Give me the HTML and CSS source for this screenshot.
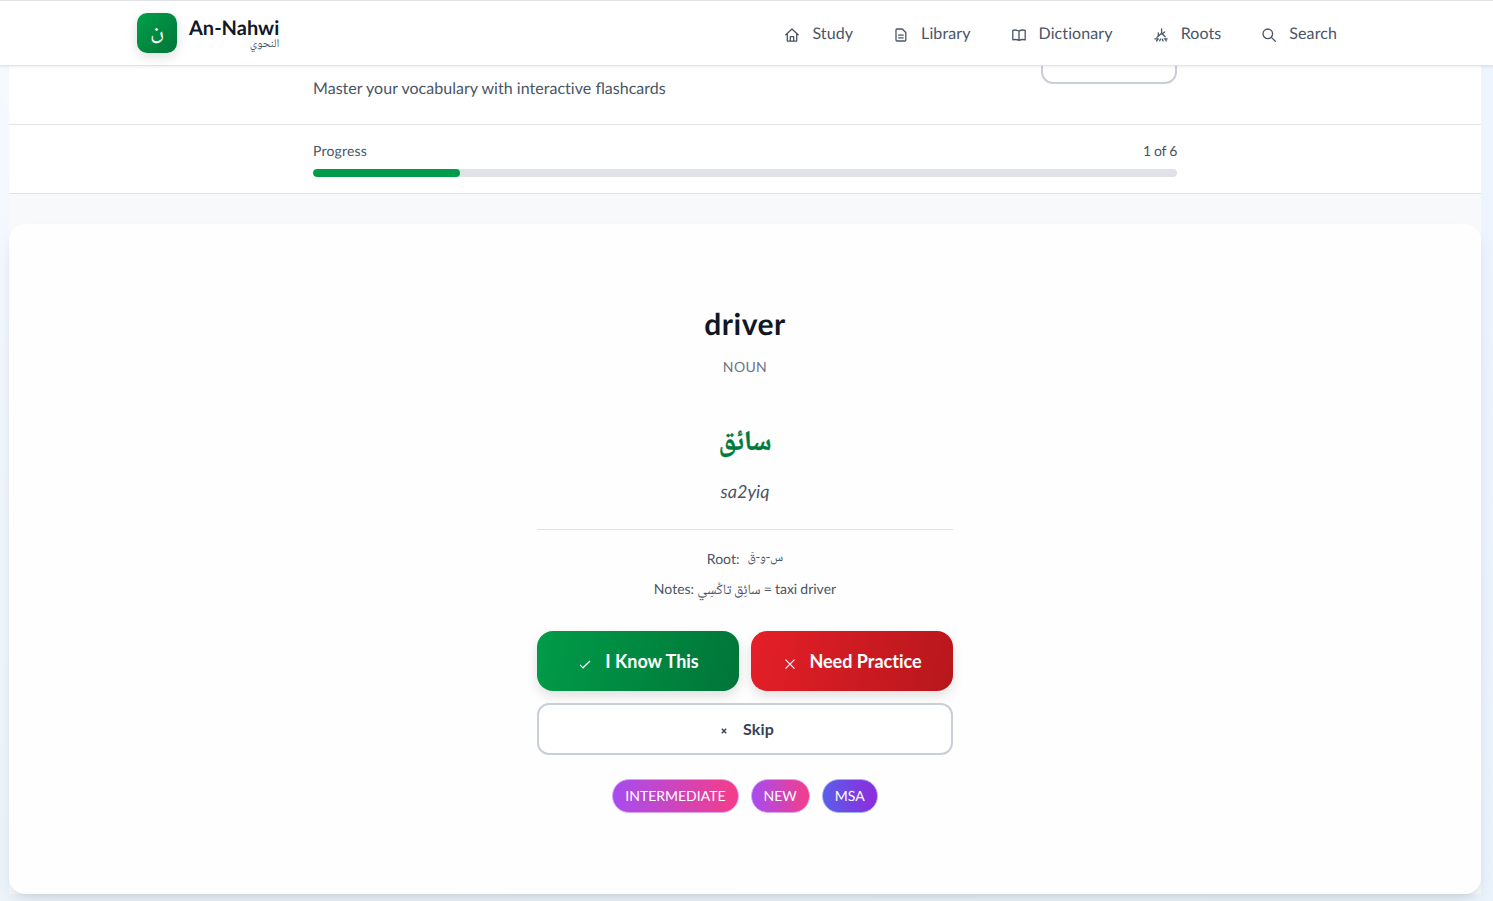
FILE: index.html
```
<!DOCTYPE html>
<html lang="en">
<head>
<meta charset="utf-8">
<title>An-Nahwi</title>
<link rel="stylesheet" href="styles.css">
</head>
<body>
<header class="topbar">
  <div class="topbar-inner">
    <div class="brand">
      <div class="logo"><span class="ar" lang="ar">ن</span></div>
      <div class="brand-text">
        <span class="brand-name">An-Nahwi</span>
        <span class="brand-ar ar" lang="ar" dir="rtl">النحوي</span>
      </div>
    </div>
    <nav class="nav">
      <a class="nav-link"><svg class="icon" viewBox="0 0 14 14"><path d="M.8 6.800 7 1l6.200 5.800M2.300 5.600v7.500h9.400V5.600M5.300 13V8.700h3.400V13"/></svg>Study</a>
      <a class="nav-link"><svg class="icon" viewBox="0 0 14 14"><path d="M3 1h5.300l3.500 3.500V12q0 1-1 1H3q-1 0-1-1V2q0-1 1-1zM4.600 7.200h4.600M4.600 9.800h4.600"/></svg>Library</a>
      <a class="nav-link"><svg class="icon" viewBox="0 0 14 14"><path d="M7 3.200Q4.300 1.300.8 2.400v9.400Q4.300 10.900 7 12.500q2.700-1.600 6.200-.7V2.400Q9.700 1.300 7 3.200zm0 0v9.300"/></svg>Dictionary</a>
      <a class="nav-link"><svg class="icon roots" viewBox="0 0 14 14"><path d="M7.600.8v4.400L3 9.300M4.300 4.800v3.300M7.600 5.200l3.600 3.500M8 6l2.700-2M.8 10.800h3.400l-1.600 2.200M5.700 12.800l.7-1.600M8.300 11.200l.8 1.800M10.200 10.800h3M11.400 11l.9 2"/></svg>Roots</a>
      <a class="nav-link"><svg class="icon" viewBox="0 0 14 14"><circle cx="5.800" cy="5.800" r="4.800"/><path d="m9.400 9.400 3.900 3.900"/></svg>Search</a>
    </nav>
  </div>
</header>
<main class="page">
  <section class="intro">
    <div class="column intro-row">
      <p class="subtitle">Master your vocabulary with interactive <span class="lig">flashcards</span></p>
      <div class="outline-box"></div>
    </div>
  </section>
  <section class="progress">
    <div class="column">
      <div class="progress-labels"><span>Progress</span><span class="count">1 of 6</span></div>
      <div class="track"><div class="fill"></div></div>
    </div>
  </section>
  <section class="card">
    <div class="card-body">
      <h1 class="word">driver</h1>
      <div class="pos">NOUN</div>
      <div class="word-ar ar" lang="ar" dir="rtl">سائق</div>
      <div class="translit">sa2yiq</div>
      <div class="details">
        <div class="root"><span>Root:</span><span class="root-ar ar" lang="ar" dir="rtl">س-و-قَ</span></div>
        <div class="notes">Notes: <span class="notes-ar ar" lang="ar">سائِق تاكْسِي</span> = taxi driver</div>
      </div>
      <div class="actions">
        <button class="btn know"><svg class="icon-action" viewBox="0 0 12 12"><path d="m1 6.800 3 3L11 3"/></svg><span>I Know This</span></button>
        <button class="btn practice"><svg class="icon-action" viewBox="0 0 12 12"><path d="m1.500 1.700 9 9m0-9-9 9"/></svg><span>Need Practice</span></button>
        <button class="btn skip"><svg class="icon-skip" viewBox="0 0 6 6"><path d="m.8.800 4.400 4.400m0-4.400L.8 5.200"/></svg><span>Skip</span></button>
      </div>
      <div class="tags">
        <span class="tag pink">INTERMEDIATE</span>
        <span class="tag pink">NEW</span>
        <span class="tag violet">MSA</span>
      </div>
    </div>
  </section>
</main>
</body>
</html>
```
FILE: styles.css
```
* { box-sizing: border-box; }
body {
  margin: 0;
  height: 901px;
  overflow: hidden;
  font: 16px/24px Lato, "Noto Naskh Arabic", "DejaVu Sans", sans-serif;
  font-variant-ligatures: no-common-ligatures;
  text-rendering: geometricPrecision;
  color: #4a5565;
  background: linear-gradient(180deg, transparent, rgba(230, 240, 248, .6)), linear-gradient(90deg, #f5faff, #eff5ff);
}
.lig { font-variant-ligatures: common-ligatures; }
.ar {
  font-family: "Noto Naskh Arabic", "Noto Sans Arabic", "DejaVu Sans", sans-serif;
  font-variant-ligatures: normal;
}
.topbar {
  position: relative;
  z-index: 2;
  height: 66px;
  background: #fff;
  border-top: 1px solid #e0e2e6;
  border-bottom: 1px solid #e0e2e6;
  box-shadow: 0 1px 3px rgba(0, 0, 0, .07);
}
.topbar-inner {
  display: flex;
  justify-content: space-between;
  align-items: center;
  height: 64px;
  padding: 0 156px 0 137px;
}
.brand { display: flex; gap: 12px; align-items: center; }
.logo {
  display: flex;
  justify-content: center;
  align-items: center;
  width: 40px;
  height: 40px;
  border-radius: 10px;
  color: #fff;
  font-size: 24px;
  background: linear-gradient(135deg, #00a04a, #007538);
  box-shadow: 0 4px 12px rgba(0, 0, 0, .13);
}
.brand-text { display: flex; flex-direction: column; padding-top: 2px; }
.brand-name { font-size: 20px; line-height: 22px; font-weight: 700; color: #101828; }
.brand-ar { font-size: 11.800px; line-height: 12px; }
.nav { display: flex; gap: 41px; padding-top: 2px; }
.nav-link { display: flex; align-items: center; gap: 13px; letter-spacing: .1px; }
.icon {
  width: 14px;
  height: 14px;
  margin-top: 1px;
  fill: none;
  stroke: currentColor;
  stroke-width: 1.300;
  stroke-linejoin: round;
  stroke-linecap: round;
}
.page { margin: 0 12px 0 9px; background: #f8f9fb; }
.column { width: 864px; margin: 0 auto; }
.intro { height: 59px; background: #fff; border-bottom: 1px solid #e0e2e6; }
.intro-row { display: flex; justify-content: space-between; align-items: flex-start; }
.subtitle { margin: 11px 0 0; letter-spacing: .03px; }
.subtitle .lig { letter-spacing: 0; }
.outline-box {
  width: 136px;
  height: 52px;
  margin-top: -34px;
  border: 2px solid #caced5;
  border-radius: 12px;
}
.progress { height: 69px; padding-top: 16px; background: #fff; border-bottom: 1px solid #e0e2e6; }
.progress-labels { display: flex; justify-content: space-between; font-size: 14px; line-height: 20px; letter-spacing: .18px; }
.count { letter-spacing: -.3px; }
.track { height: 8px; margin-top: 8px; border-radius: 4px; overflow: hidden; background: #e1e2e8; }
.fill { width: 147px; height: 8px; border-radius: 4px; background: #009c49; }
.card {
  height: 670px;
  margin-top: 30px;
  padding-top: 80px;
  border-radius: 16px;
  background: #fefefe;
  box-shadow: 0 10px 20px -5px rgba(0, 0, 0, .1), 0 4px 8px -4px rgba(0, 0, 0, .1);
}
.card-body { width: 416px; margin: 0 auto; text-align: center; }
.word { margin: 0; font-size: 30px; line-height: 40px; font-weight: 700; letter-spacing: .5px; color: #101828; }
.pos { margin-top: 13px; font-size: 14px; line-height: 20px; letter-spacing: .35px; color: #6a7282; }
.word-ar { height: 48px; margin-top: 43px; font-size: 28px; line-height: 48px; font-weight: 700; color: #007a3b; -webkit-text-stroke: .3px #007a3b; }
.translit { margin-top: 9px; font-size: 18px; line-height: 28px; font-style: italic; }
.details { margin-top: 24px; padding-top: 19px; border-top: 1px solid #e0e2e6; font-size: 14px; line-height: 20px; }
.root { display: flex; justify-content: center; gap: 8px; height: 20px; }
.notes { height: 20px; margin-top: 10px; white-space: nowrap; word-spacing: -.5px; }
.root-ar { font-size: 13px; line-height: 21px; }
.notes-ar { font-size: 14.500px; line-height: 16px; }
.actions { display: grid; grid-template-columns: 1fr 1fr; gap: 12px; margin-top: 32px; }
.btn {
  display: flex;
  justify-content: center;
  align-items: center;
  height: 60px;
  border: 0;
  border-radius: 16px;
  padding: 0;
  font: 700 18px/28px Lato, sans-serif;
  font-variant-ligatures: no-common-ligatures;
  color: #fff;
}
.know { gap: 14px; background: linear-gradient(105deg, #009c49, #007538); box-shadow: 0 5px 12px rgba(0, 0, 0, .12); }
.practice { gap: 13px; background: linear-gradient(105deg, #e51f28, #b6171c); box-shadow: 0 5px 12px rgba(0, 0, 0, .12); }
.skip {
  grid-column: 1 / 3;
  gap: 16px;
  height: 52px;
  padding-left: 5px;
  border: 2px solid #caced5;
  border-radius: 12px;
  font-size: 16px;
  letter-spacing: .2px;
  color: #364153;
  background: #fff;
}
.know, .practice { padding-left: 2px; }
.icon-action, .icon-skip { fill: none; stroke: currentColor; }
.icon-action { width: 12px; height: 12px; margin-top: 5px; stroke-width: 1.200; }
.icon-skip { width: 6px; height: 6px; margin-top: 4px; stroke-width: 1.400; }
.tags { display: flex; justify-content: center; gap: 12px; margin-top: 24px; }
.tag {
  height: 34px;
  padding: 0 12px;
  border: 1px solid #d9a5f5;
  border-radius: 17px;
  font-size: 14px;
  line-height: 32px;
  color: #fff;
}
.pink { background: linear-gradient(90deg, #a64cf0, #f53d87); }
.violet { border-color: #9fb2f5; background: linear-gradient(90deg, #5b5dea, #8e2bdc); }
```
